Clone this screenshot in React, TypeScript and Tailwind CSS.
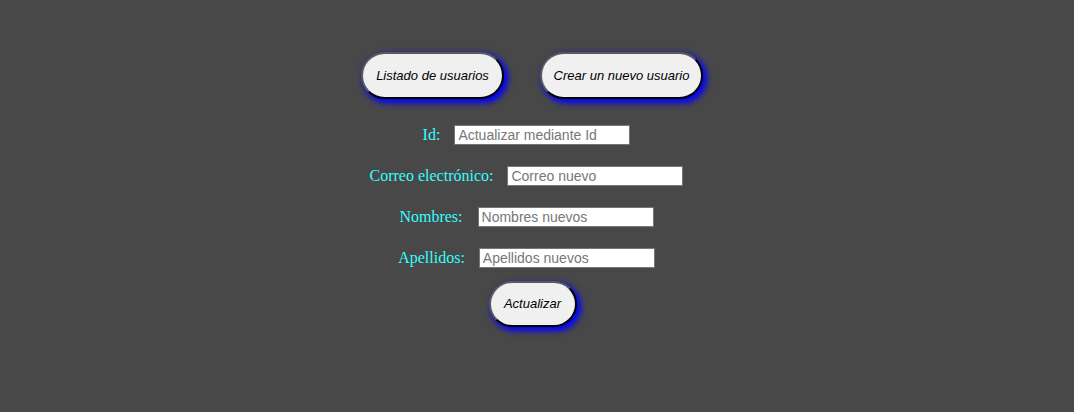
import React from "react";

const btn =
  "rounded-full bg-[#f0f0f0] border-2 border-t-[#5a5a5a] border-l-[#5a5a5a] border-b-black border-r-black text-black italic text-[13px] [font-family:'Liberation_Sans',Arial,sans-serif] shadow-[3px_3px_6px_1px_#0000ff]";

const fields = [
  { label: "Id:", placeholder: "Actualizar mediante Id", gap: "ml-[14px]" },
  { label: "Correo electrónico:", placeholder: "Correo nuevo", gap: "ml-[14px]" },
  { label: "Nombres:", placeholder: "Nombres nuevos", gap: "ml-[15px]" },
  { label: "Apellidos:", placeholder: "Apellidos nuevos", gap: "ml-[14px]" },
];

export default function App() {
  return (
    <div className="w-[1074px] h-[412px] bg-[#484848] flex flex-col items-center">
      <div className="flex gap-[36px] mt-[52px] pr-[10px]">
        <button className={`${btn} w-[143px] h-[47px]`}>Listado de usuarios</button>
        <button className={`${btn} w-[163px] h-[47px]`}>Crear un nuevo usuario</button>
      </div>
      <div className="flex flex-col items-center mt-[26px] gap-[21px] pr-[21px]">
        {fields.map((f) => (
          <div key={f.label} className="flex items-center h-[20px]">
            <span className="text-[16px] text-[#33ffff] [font-family:'Liberation_Serif','Times_New_Roman',serif]">
              {f.label}
            </span>
            <input
              placeholder={f.placeholder}
              className={`${f.gap} w-[176px] h-[20px] bg-white border border-[#767676] px-[3px] text-[14px] text-black placeholder:text-[#777] [font-family:'Liberation_Sans',Arial,sans-serif] outline-none`}
            />
          </div>
        ))}
      </div>
      <button className={`${btn} w-[88px] h-[46px] mt-[13px] mr-[9px]`}>Actualizar</button>
    </div>
  );
}
